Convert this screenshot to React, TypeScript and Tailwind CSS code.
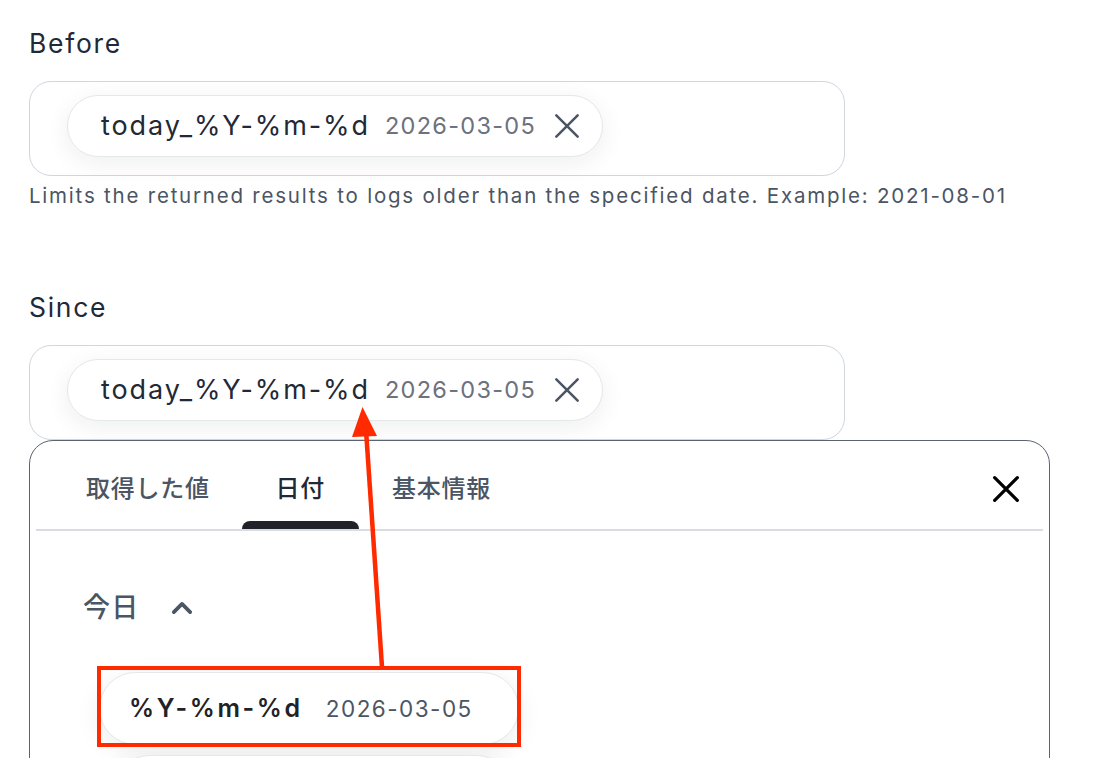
import React from "react";

const XIcon = ({ className, strokeWidth = 2.5 }: { className?: string; strokeWidth?: number }) => (
  <svg viewBox="0 0 24 24" fill="none" stroke="currentColor" strokeWidth={strokeWidth} strokeLinecap="round" className={className}>
    <path d="M4 4L20 20M20 4L4 20" />
  </svg>
);

const TokenPill = () => (
  <div className="flex items-center h-[62px] w-[536px] rounded-full bg-white border border-[#e5e7eb] shadow-[0_6px_24px_rgba(15,23,42,0.07)] pl-[33px]">
    <span className="text-[27px] tracking-[0.071em] text-[#1f2937]">today_%Y-%m-%d</span>
    <span className="ml-[15px] text-[23.5px] tracking-[0.055em] text-[#6b7280]">2026-03-05</span>
    <XIcon className="ml-[15px] w-[32px] h-[32px] text-[#4b5563]" strokeWidth={1.9} />
  </div>
);

const Field = ({ label, helper }: { label: string; helper?: string }) => (
  <div className="flex flex-col">
    <div className="text-[26.5px] leading-[32px] tracking-[0.065em] text-[#1f2937]">{label}</div>
    <div className="mt-[22px] h-[95px] w-[816px] rounded-[22px] border-[1.5px] border-[#cfd6df] pl-[37px] pt-[13px]">
      <TokenPill />
    </div>
    {helper && (
      <div className="mt-[7px] text-[20.5px] leading-[26px] tracking-[0.087em] text-[#4b5563]">{helper}</div>
    )}
  </div>
);

export default function App() {
  return (
    <div className="relative w-[1094px] h-[758px] overflow-hidden bg-white font-['Inter','Noto_Sans_CJK_JP',sans-serif]">
      <div className="pl-[29px] pt-[27px] flex flex-col">
        <Field label="Before" helper="Limits the returned results to logs older than the specified date. Example: 2021-08-01" />
        <div className="mt-[82px]">
          <Field label="Since" />
        </div>
        <div className="w-[1021px] h-[400px] rounded-t-[24px] border-[1.5px] border-[#5b6370] px-[6px]">
          <div className="flex items-end justify-between h-[90px] border-b-2 border-[#d9dde3]">
            <div className="flex ml-[16px] text-[24px] font-medium tracking-[0.03em]">
              <div className="flex flex-col items-center pl-[34px] pr-[32px]">
                <span className="text-[#4b5563] leading-[30px]">取得した値</span>
                <div className="h-[8px] mt-[17px]" />
              </div>
              <div className="flex flex-col items-center px-[34px] relative">
                <span className="text-[#1f2937] leading-[30px]">日付</span>
                <div className="h-[8px] mt-[17px]" />
                <div className="absolute bottom-0 left-0 right-0 h-[8px] rounded-t-[8px] bg-[#1f2328]" />
              </div>
              <div className="flex flex-col items-center px-[33px]">
                <span className="text-[#4b5563] leading-[30px]">基本情報</span>
                <div className="h-[8px] mt-[17px]" />
              </div>
            </div>
            <XIcon className="w-[34px] h-[34px] mb-[23px] mr-[20px] text-black" strokeWidth={2.3} />
          </div>
          <div className="flex items-center mt-[61px] ml-[47px] gap-[28px]">
            <span className="text-[27px] font-medium tracking-[0.05em] text-[#4b5563] leading-[32px]">今日</span>
            <svg viewBox="0 0 24 24" className="w-[28px] h-[28px] text-[#4b5563]" fill="none" stroke="currentColor" strokeWidth={3.2} strokeLinecap="round" strokeLinejoin="round">
              <path d="M5 15.5L12 8.5L19 15.5" />
            </svg>
          </div>
          <div className="mt-[48px] ml-[63px] flex flex-col gap-[10px]">
            <div className="flex items-center h-[73px] w-[420px] rounded-full bg-white border border-[#e5e7eb] shadow-[0_6px_26px_rgba(15,23,42,0.08)] pl-[29px]">
              <span className="text-[25px] font-semibold tracking-[0.105em] text-[#1f2328]">%Y-%m-%d</span>
              <span className="ml-[23px] text-[22.5px] tracking-[0.065em] text-[#4b5563]">2026-03-05</span>
            </div>
            <div className="h-[73px] w-[400px] ml-[14px] rounded-full bg-white border border-[#e5e7eb] shadow-[0_6px_26px_rgba(15,23,42,0.08)]" />
          </div>
        </div>
      </div>

      {/* annotation */}
      <div className="absolute left-[97px] top-[666px] w-[424px] h-[81px] border-[4.5px] border-[#ff2a00]" />
      <svg className="absolute left-0 top-0 pointer-events-none" width="1094" height="758" viewBox="0 0 1094 758">
        <line x1="382" y1="667" x2="366" y2="430" stroke="#ff2a00" strokeWidth="4.5" />
        <polygon points="362.5,407 352,437 377,436" fill="#ff2a00" />
      </svg>
    </div>
  );
}
